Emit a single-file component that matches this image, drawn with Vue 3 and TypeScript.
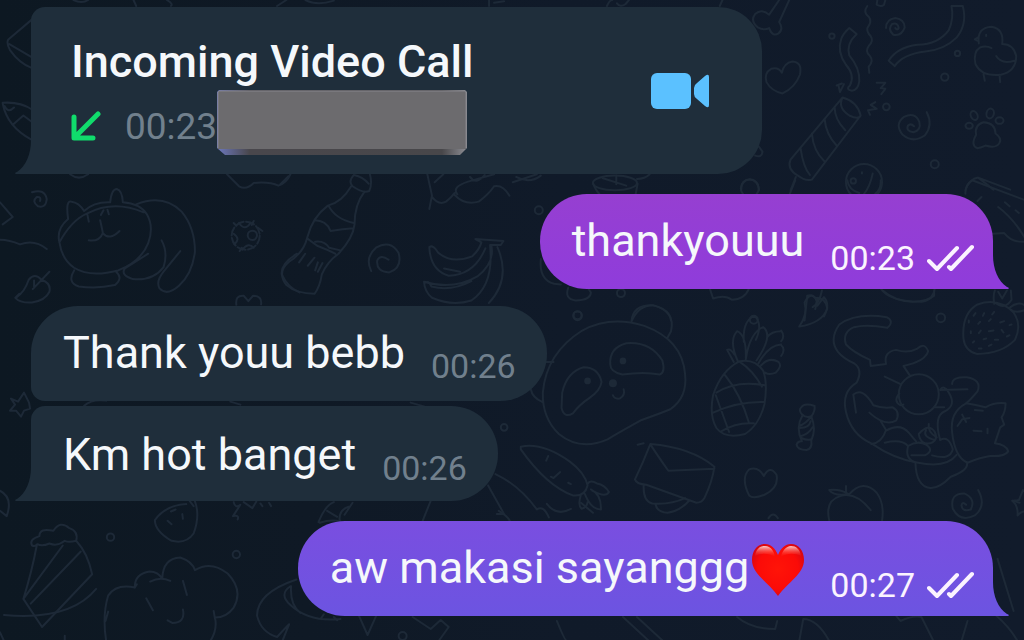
<script setup lang="ts">
interface Message {
  id: number
  text: string
  time: string
  outgoing: boolean
  tail: boolean
  heart?: boolean
  tone: string
}

const messages: Message[] = [
  { id: 1, text: 'thankyouuu', time: '00:23', outgoing: true, tail: true, tone: 'purple' },
  { id: 2, text: 'Thank youu bebb', time: '00:26', outgoing: false, tail: false, tone: 'first' },
  { id: 3, text: 'Km hot banget', time: '00:26', outgoing: false, tail: true, tone: 'last' },
  { id: 4, text: 'aw makasi sayanggg', time: '00:27', outgoing: true, tail: true, heart: true, tone: 'violet' },
]
</script>

<template>
  <main class="chat">
    <svg class="wallpaper" viewBox="0 0 1024 640" preserveAspectRatio="xMinYMin slice" aria-hidden="true">
      <!-- upper left edge -->
      <g transform="scale(.3333)">
        <path d="M96 58L25 118Q18 128 30 150Q58 190 96 204M28 132L96 172M8 308Q60 304 96 328M8 310Q22 380 94 418M14 318Q24 340 42 322M40 372L70 346L94 364M220 0Q245 12 264 0M400 0L408 18M500 0Q520 12 512 18M830 18L858 0M915 0Q950 18 1000 2M1465 0V18M1480 8L1510 4" />
      </g>
      <!-- upper right -->
      <g transform="translate(512 0) scale(.3333)">
        <path d="M282 18Q290 0 298 0M312 10Q322 24 338 12L348 0M620 18L628 0M798 0L768 44Q745 24 726 42Q710 62 734 82Q752 92 768 84Q778 112 796 100Q812 88 798 66L828 0" />
        <path d="M806 218Q796 200 774 206Q752 218 760 246Q774 272 808 280Q846 262 860 224Q868 186 838 184Q812 188 806 218Z" />
        <circle cx="956" cy="108" r="8" /><circle cx="1332" cy="160" r="8" /><circle cx="1294" cy="231" r="11" /><circle cx="1119" cy="320" r="10" /><circle cx="1264" cy="492" r="12" />
        <path d="M1008 84L1030 102Q998 132 1008 166Q1040 204 1038 244Q1034 270 1016 272Q996 268 1010 256Q1026 226 998 194Q970 154 984 116Q990 100 1008 84Z" />
        <path d="M1062 18Q1048 36 1066 50Q1078 64 1062 84Q1060 96 1072 108Q1082 122 1066 138Q1054 154 1070 168Q1082 182 1066 200L1068 218" />
        <path d="M1118 84Q1118 58 1146 54Q1174 58 1174 82Q1164 110 1140 104Q1122 88 1136 72Q1154 66 1156 84Q1152 92 1146 84M1092 0L1090 14Q1104 22 1112 14L1116 0" />
        <path d="M1314 18L1348 18Q1362 72 1330 112Q1292 150 1236 154Q1168 162 1144 198L1126 182Q1150 142 1212 134Q1276 132 1306 90Q1322 56 1314 18Z" />
        <path d="M1396 130Q1390 82 1434 80Q1472 86 1466 132Q1500 132 1508 168Q1508 214 1462 224Q1404 230 1386 192Q1378 156 1400 142Q1418 136 1434 144M1394 112L1384 118L1396 124M1448 168Q1464 194 1502 182M1410 222L1414 242M1458 224L1460 246M1418 104V108" />
        <path d="M970 256L986 250M976 258L980 276L992 252M1090 248L1116 248L1102 264L1116 266L1104 282M1086 306L1072 314L1090 326L1064 330L1070 344" />
        <path d="M988 292Q1032 304 1042 346Q1036 360 1008 346Q972 322 988 292ZM988 292L832 478Q820 506 854 526Q876 544 896 538L1042 346M964 320Q964 358 996 390M934 356Q938 402 970 436M896 400Q900 452 934 484M862 444Q870 502 890 524M848 530L832 570" />
        <path d="M1240 336Q1260 374 1234 406Q1198 430 1168 404Q1142 372 1172 350Q1206 334 1218 366Q1224 390 1200 396Q1176 392 1184 376Q1192 368 1202 378" />
        <ellipse cx="1382" cy="346" rx="10" ry="14" transform="rotate(-25 1382 346)" /><ellipse cx="1430" cy="340" rx="11" ry="15" transform="rotate(15 1430 340)" /><ellipse cx="1458" cy="361" rx="12" ry="10" /><ellipse cx="1367" cy="377" rx="11" ry="9" />
        <path d="M1410 366Q1382 374 1388 404Q1370 436 1392 444Q1404 442 1416 436Q1448 446 1458 428Q1466 414 1446 400Q1446 368 1410 366Z" />
        <circle cx="1052" cy="545" r="54" /><circle cx="1020" cy="542" r="8" /><path d="M1046 516V520M1078 520Q1070 560 1050 584M684 570Q684 540 710 538Q734 540 738 570M726 466Q746 474 748 454L736 438M1356 570Q1368 536 1394 532L1490 568M1394 532L1440 568" />
        <ellipse cx="306" cy="548" rx="66" ry="22" /><path d="M240 548Q248 570 260 582M374 550L368 582M270 534L340 556M310 526V552M10 530Q50 552 84 526M372 536Q396 536 410 522" />
      </g>
      <!-- sleeping cat, leaf and virus -->
      <g transform="translate(0 170) scale(.3333)">
        <path d="M96 66Q134 54 140 86Q138 114 114 108Q94 94 110 80Q124 78 120 92M0 96L38 140L8 162M0 208Q28 208 60 222Q104 206 140 236M50 380Q74 364 86 328Q104 306 124 328Q154 338 148 364Q136 390 96 396Q60 398 46 382L58 370M98 356L148 304M102 330V350" />
        <path d="M178 216Q168 176 204 146Q196 88 214 94Q236 96 252 122Q282 94 330 96Q334 56 350 56Q366 60 368 96Q420 100 440 132Q462 170 444 218Q422 274 354 300Q270 322 222 292Q186 268 178 216ZM178 216Q214 150 260 130Q340 88 430 126M262 134L266 154M300 150Q306 176 308 188Q298 214 266 210M308 188Q328 212 358 182M310 120L302 134M322 118L326 132M408 102Q490 70 544 124Q584 172 584 244Q576 310 536 346Q500 378 478 354Q466 334 490 304L540 242M484 210Q504 246 490 290Q458 332 398 326Q360 314 374 294L444 250M222 300Q200 336 236 348Q290 356 344 344Q370 324 348 304" />
        <circle cx="736" cy="196" r="42" stroke-dasharray="25 8" /><circle cx="756" cy="195" r="14" /><path d="M716 158Q734 184 750 158M700 190Q722 206 702 222M726 238Q744 214 760 232M700 158L708 166M772 172L786 182M760 152L754 164M718 242L724 232M680 12L716 48Q738 60 760 38Q808 34 834 46Q858 38 870 12M210 12Q236 32 264 12M890 250Q840 280 844 312Q862 352 898 366M708 403Q704 374 730 376L744 392L758 376Q786 376 782 402" />
      </g>
      <!-- bottle, spiral and bananas -->
      <g transform="translate(280 170) scale(.3333)">
        <path d="M220 14Q202 34 216 48Q248 70 266 62Q276 40 268 12M220 14Q248 20 264 40M212 48Q184 96 142 106Q96 140 80 202Q70 246 26 274Q-12 304 18 344Q48 370 102 370Q118 350 124 312Q140 274 174 250Q218 202 222 162Q222 102 252 64M144 106Q164 146 220 158M102 150Q138 150 150 182Q188 176 218 174M80 204L110 226Q142 238 164 250M104 214Q132 210 146 232L180 240M74 250L56 276M102 262L82 286M112 276L104 300M126 278L112 304M0 42L24 18" />
        <path d="M272 302Q252 262 286 232Q330 206 354 248Q366 292 326 306Q286 304 290 270Q300 250 324 268" />
        <path d="M446 230Q458 222 472 246Q512 282 574 258Q596 238 602 216L584 206L668 212L660 224L628 224M446 232Q450 300 504 316Q580 314 614 234M490 294L538 304M632 226Q642 278 590 318Q518 360 430 334Q432 364 454 382Q514 408 572 390Q640 344 628 226M650 230Q692 326 624 398M432 338Q444 328 452 348Q510 364 572 332M440 12L454 76L446 116M454 80Q474 106 496 94Q510 84 522 68M462 36L488 12M530 72Q512 50 562 34L640 12M522 74Q552 106 594 94Q624 72 640 48Q666 42 686 76M568 20Q586 46 612 14M696 36L768 12" />
        <circle cx="774" cy="120" r="12" /><path d="M780 266Q774 328 820 340L840 342" />
      </g>
      <!-- doodles around the first outgoing bubble -->
      <g transform="translate(530 180) scale(.3333)">
        <circle cx="656" cy="24" r="27" /><path d="M776 40L792 0M948 0Q952 28 984 38M1048 0Q1050 28 1032 40M1302 40Q1300 14 1322 0L1482 60M1338 62L1350 50M1384 160L1418 158Q1442 188 1482 184M1400 80Q1446 114 1482 176M1420 66L1434 78M1452 90L1462 98M112 322Q100 356 134 360Q178 360 180 336L172 324M302 420Q306 374 362 374Q414 386 420 420M536 324L546 354Q582 342 602 358Q640 358 654 324M820 420L828 346Q856 338 858 376L878 350Q898 372 878 408M858 358L852 386M1048 324Q1074 364 1170 364Q1206 360 1210 324" />
        <circle cx="270" cy="338" r="12" /><circle cx="140" cy="404" r="12" /><circle cx="668" cy="418" r="12" />
      </g>
      <!-- panda, pineapple, carrot and envelope -->
      <g transform="translate(480 300) scale(.3333)">
        <circle cx="290" cy="46" r="13" /><circle cx="70" cy="380" r="10" />
        <path d="M186 276Q196 158 304 90Q388 44 490 76Q604 118 612 220Q620 290 568 326Q534 340 482 358Q424 390 380 416Q298 452 234 400Q184 352 186 276ZM452 62Q472 14 516 14Q584 30 570 92L558 114M196 184L218 184M150 266Q154 290 184 304" />
        <path d="M244 276Q258 214 308 200Q352 200 362 244Q358 270 326 292Q296 312 276 338Q250 354 242 322ZM388 192Q384 142 436 128Q508 122 544 180Q554 216 536 222Q490 212 424 222Q388 214 388 192ZM396 284Q400 296 416 294Q434 284 428 266" />
        <circle class="dot" cx="320" cy="241" r="10" /><circle class="dot" cx="426" cy="181" r="10" /><circle class="dot" cx="396" cy="248" r="12" />
        <path d="M776 182Q720 210 696 284Q684 344 706 382Q732 416 792 400Q834 374 850 310Q860 248 846 210Q820 174 776 182ZM732 224Q778 280 804 368M776 184Q816 210 842 258M704 284L744 394M706 276Q766 238 850 254M696 336Q768 302 848 304M720 392Q766 364 818 368M770 182Q742 120 768 92Q796 104 794 172M788 124Q784 60 820 46Q846 70 824 118M794 176Q806 96 846 80Q878 104 826 180M858 110Q870 92 900 92M832 188Q862 134 900 132M840 194Q864 168 892 184Q904 196 884 216Q864 224 852 216M758 184L738 148Q748 142 760 162" />
        <path d="M120 438Q184 424 266 482Q312 516 320 554Q312 588 276 584Q198 556 120 446ZM202 466L196 480M238 514L218 532L210 528M262 546L270 550M320 550Q328 536 348 548Q372 552 384 574Q374 592 334 570M330 566Q362 582 360 626Q330 626 312 580M300 582Q290 614 302 624Q318 620 320 604" />
        <path d="M508 430Q486 486 462 536Q466 550 496 552L646 606Q662 606 670 592Q694 542 700 498Q630 440 508 430ZM510 434Q532 468 562 510L700 504M488 554Q486 602 514 608Q570 612 612 592M524 612Q528 634 560 636Q598 630 624 600M470 432L488 428" />
        <path d="M848 526Q832 496 804 506Q778 532 804 584Q816 596 850 582Q894 562 886 522Q866 492 848 526ZM44 520Q116 554 168 626Q188 612 204 650M22 554Q50 604 70 640L48 640M862 652Q876 630 890 652" />
      </g>
      <!-- playing cat, strawberry and peach -->
      <g transform="translate(780 290) scale(.3333)">
        <path d="M54 108Q80 72 70 36Q86 4 102 22Q134 22 138 54Q122 98 54 108ZM94 50Q114 40 122 0M110 22L104 44" />
        <circle cx="478" cy="82" r="13" />
        <path d="M546 144Q540 70 588 42Q650 20 696 66Q722 104 700 148Q660 190 586 190Q550 180 546 144ZM638 40Q634 14 640 0M640 36Q670 60 690 28L688 0M650 4L662 24L676 0M684 52Q710 30 732 46M686 56Q700 70 732 58" />
        <path d="M576 76L582 68M608 68L604 76M638 64L632 72M562 90V96M590 100L596 94M622 92L628 86M656 96L668 92M684 104L690 102M568 122V128M592 128L598 120M622 122L636 120M660 118L666 126M574 156L578 152M606 146L614 144M640 148H650M676 138L684 134M592 174H600M622 166L630 162" />
        <path d="M318 112Q340 92 316 80Q224 66 174 102Q142 148 170 184Q186 204 218 218Q246 236 226 276Q180 304 194 364Q210 432 270 458Q340 506 410 516Q494 534 526 492M318 112Q256 100 218 110Q182 126 194 162Q216 186 266 208L268 226L314 220Q306 184 344 178Q378 190 408 174Q430 154 440 182Q432 212 366 226L386 256M310 258L356 280" />
        <circle cx="412" cy="311" r="60" />
        <path d="M354 308Q334 332 358 344L366 342M224 366L216 312Q244 288 276 344Q302 354 334 350Q358 364 344 390Q310 408 264 366M298 392L314 418Q302 456 270 460M314 420Q356 396 382 426L404 452M310 456Q360 444 380 466Q370 504 400 514M380 466Q408 448 434 462Q460 480 430 494L390 494M412 430Q442 396 460 424Q472 450 446 458Q416 462 412 430ZM434 418Q422 438 460 448M442 400Q438 424 466 440M452 494Q506 510 514 476Q502 434 476 448Q456 376 490 362Q526 344 502 306Q486 280 476 298L558 296M512 280Q512 258 556 260Q602 268 588 302Q568 326 554 338M460 350H488" />
        <path d="M554 338Q504 364 512 426Q520 500 558 516Q598 500 626 496Q670 498 680 482Q674 462 640 458L656 410L668 402L660 380Q672 364 672 338Q640 334 612 350Q582 342 554 338ZM528 406L542 386L564 382M542 372L554 394M580 358L604 360M576 420L600 422M618 414V428M402 516Q404 586 446 592Q472 594 508 558Q564 538 556 514" />
        <path d="M60 350Q70 336 100 346Q102 362 90 378Q106 414 90 450Q94 474 76 478Q48 478 46 462Q50 450 62 452Q42 410 64 374Q50 358 60 350ZM64 372Q74 384 92 376M56 412Q84 412 88 392M60 442Q78 450 88 446M54 406Q72 400 90 378M60 436Q82 430 94 410" />
        <path d="M144 690Q130 630 176 616Q222 600 268 658M144 598Q174 594 202 610Q160 618 144 598ZM194 586V606M204 610Q246 564 286 606Q310 638 302 690M590 598Q616 646 580 674Q536 696 514 654Q504 608 548 608Q584 624 568 656Q542 664 540 644Q542 630 554 642M692 630L712 628L724 598L732 606M692 630Q710 644 708 674Q724 658 732 664M0 120Q12 138 0 152M0 164Q14 176 0 196M304 0Q340 32 394 34Q440 32 458 16V0" />
      </g>
      <!-- cake, muffin and whale -->
      <g transform="translate(0 490) scale(.3333)">
        <path d="M96 164Q86 146 118 136Q118 110 160 120Q180 88 208 112Q236 122 228 150Q206 156 194 150Q172 168 148 158Q126 168 112 160Q106 168 96 164ZM110 164Q96 240 70 324L126 408L276 250Q262 186 230 152M70 324L188 164M92 338L242 182" />
        <circle cx="331" cy="139" r="11" /><circle cx="708" cy="191" r="11" />
        <path d="M558 40Q494 44 464 88Q464 120 514 150Q558 160 580 128Q600 74 584 32M502 90L514 100M546 70L548 84M512 62L526 56M568 30L580 46M700 34Q704 54 720 42L698 76Q718 72 712 86M730 34L756 52L768 32M780 38L786 46M806 36L812 46M954 94Q974 44 1000 34M958 96Q992 84 1020 92M980 60L1010 78M0 0Q40 20 20 76L0 60" />
        <path d="M318 450Q306 374 324 314Q348 278 404 290Q402 250 448 242Q474 242 486 264Q488 202 540 200Q576 212 584 238Q632 208 682 248Q730 298 700 350Q678 380 644 380Q652 416 630 450M324 362L316 390M404 290L410 280M450 272Q480 256 510 270M548 270L560 312M438 322L458 358M548 356Q556 396 516 396L502 388M640 360L644 384M888 266Q770 306 770 374Q782 424 830 438Q850 416 866 400L846 450M870 286Q834 310 870 342Q926 394 1020 384M872 286Q868 342 900 366M970 370L962 382M1000 378L1010 388M194 434V450M0 424L12 450" />
      </g>
      <!-- strip between bubbles and lower edge -->
      <path d="M11 398L18 401L24 392L29 402L30 408L24 410L21 416L16 410L10 410L15 404ZM84 405Q92 398 106 400M230 401L240 404M410 402L424 406M340 524Q336 510 348 506M352 502L344 514M430 500L422 520M498 510Q508 516 510 522M546 503Q556 516 570 508M580 502L592 512M1011 500L1018 502M4 614Q70 620 96 588M358 614L367 634L376 614M412 616L430 628L440 619L448 626L438 640M556 620Q564 640 566 640M622 616L648 640M636 616L662 640M736 616Q750 628 774 628L776 620M798 640L802 618Q816 618 828 640M894 614L899 620Q912 614 920 616L932 640M966 620L960 640M994 614Q1008 626 1016 640M996 558L1012 610" />
      <circle cx="402" cy="635" r="4" />
    </svg>

    <article class="bubble call">
      <div>
        <h1 class="call-title">Incoming Video Call</h1>
        <div class="call-info">
          <svg class="arrow" viewBox="0 0 30 30" role="img" aria-label="Incoming">
            <path d="M27 3L4 26M3 6V27H22" />
          </svg>
          <time class="call-time">00:23</time>
          <svg class="cover" viewBox="0 0 250 66" aria-hidden="true">
            <defs>
              <linearGradient id="bevel">
                <stop offset="0" stop-color="#6d78bd" />
                <stop offset=".13" stop-color="#49474c" />
                <stop offset=".9" stop-color="#48474a" />
                <stop offset="1" stop-color="#8d8e94" />
              </linearGradient>
            </defs>
            <path fill="url(#bevel)" d="M2 0H248L250 2V58L243 65H8L0 58V2Z" />
            <path fill="#6c6b6e" d="M2 1H248L249 3V59H1V3Z" />
            <path fill="none" stroke="#85858b" d="M1 58V2L2 1H248L249 2V58" />
          </svg>
        </div>
      </div>
      <button class="video" type="button" aria-label="Video call">
        <svg viewBox="0 0 58 38">
          <rect x="0" y="1" width="40" height="36" rx="6" />
          <path d="M43 16Q43 13 46 11L54 4Q58 1 58 5V33Q58 37 54 34L46 27Q43 25 43 22Z" />
        </svg>
      </button>
      <svg class="tail left" viewBox="0 0 18 34" aria-hidden="true"><path d="M16 0H18V34H1Q-1 33 2 32C11 26 16 14 16 0Z" /></svg>
    </article>

    <article
      v-for="m in messages"
      :key="m.id"
      class="bubble message"
      :class="[m.tone, m.outgoing ? 'outgoing' : 'incoming']"
    >
      <p class="text">
        {{ m.text }}<svg v-if="m.heart" class="heart" viewBox="0 0 52 54" role="img" aria-label="Red heart">
          <defs>
            <radialGradient id="heartFill" cx=".5" cy=".48" r=".6">
              <stop offset="0" stop-color="#ff1408" />
              <stop offset=".65" stop-color="#fb0b08" />
              <stop offset="1" stop-color="#cf0614" />
            </radialGradient>
            <linearGradient id="heartShine" x2="0" y2="1">
              <stop offset="0" stop-color="#ffd5cf" stop-opacity=".95" />
              <stop offset="1" stop-color="#ff3020" stop-opacity="0" />
            </linearGradient>
          </defs>
          <path fill="url(#heartFill)" d="M26 12C23 5 19 1 13 1C5 1 0 8 0 17C0 31 16 39 26 53C36 39 52 31 52 17C52 8 47 1 39 1C33 1 29 5 26 12Z" />
          <path fill="url(#heartShine)" d="M3 13C4 6 8 3 13 3C19 3 22 8 23 14C17 10 9 10 3 13ZM29 14C30 8 34 3 39 3C44 3 48 6 49 13C43 10 35 10 29 14Z" />
        </svg>
      </p>
      <div class="meta">
        <time>{{ m.time }}</time>
        <svg v-if="m.outgoing" class="checks" viewBox="0 0 48 28" role="img" aria-label="Read">
          <path d="M2 17L10 25L30 4M22 23L24 25L45 3" />
        </svg>
      </div>
      <svg v-if="m.tail" class="tail" :class="m.outgoing ? 'right' : 'left'" viewBox="0 0 18 34" aria-hidden="true">
        <path d="M16 0H18V34H1Q-1 33 2 32C11 26 16 14 16 0Z" />
      </svg>
    </article>
  </main>
</template>

<style>
body {
  margin: 0;
  background: #101a26;
}
</style>

<style scoped>
.chat {
  position: relative;
  display: flex;
  flex-direction: column;
  align-items: flex-start;
  box-sizing: border-box;
  min-height: 100vh;
  padding: 7px 31px 25px;
  overflow: hidden;
  background: linear-gradient(90deg, #0d1822 0%, #0f1925 30%, #101a29 55%, #111b2b 100%);
  color: #f5f8fb;
  font-family: Roboto, "Liberation Sans", sans-serif;
}

.wallpaper {
  position: absolute;
  inset: 0;
  width: 100%;
  height: 100%;
  fill: none;
  stroke: #1d2937;
  stroke-width: 6;
  stroke-linecap: round;
  stroke-linejoin: round;
}

.wallpaper > path,
.wallpaper > circle {
  stroke-width: 2;
}

.wallpaper .dot {
  fill: #1d2937;
  stroke: none;
}

.bubble {
  --fill: #1f2e3b;
  position: relative;
  display: flex;
  box-sizing: border-box;
  max-width: 100%;
  background: var(--fill);
}

.call {
  align-items: center;
  justify-content: space-between;
  width: 731px;
  padding: 28px 53px 18px 40px;
  border-radius: 14px 44px 44px 0;
}

.call-title {
  margin: 0;
  font-size: 45px;
  font-weight: 500;
  line-height: 54px;
}

.call-info {
  display: flex;
  align-items: center;
  margin-top: 1px;
}

.arrow {
  width: 30px;
  height: 30px;
  margin-top: 6px;
  fill: none;
  stroke: #10dc6c;
  stroke-width: 5;
  stroke-linecap: round;
  stroke-linejoin: round;
}

.call-time {
  margin: 8px 0 0 24px;
  color: #71808d;
  font-size: 37px;
  line-height: 44px;
}

.cover {
  width: 250px;
  height: 66px;
}

.video {
  display: flex;
  margin-bottom: 10px;
  padding: 0;
  border: 0;
  background: none;
}

.video svg {
  width: 58px;
  height: 38px;
  fill: #5bc1ff;
}

.message {
  justify-content: space-between;
  padding: 20px 31px 11px 32px;
}

.text {
  display: flex;
  margin: 0;
  font-size: 45px;
  line-height: 54px;
  white-space: nowrap;
}

.meta {
  display: flex;
  align-items: center;
  align-self: flex-end;
  gap: 12px;
  height: 40px;
  margin: 24px 0 0 26px;
  color: #71808d;
  font-size: 34px;
  line-height: 40px;
}

.incoming {
  margin-top: 17px;
}

.incoming .meta {
  margin: 20px 0 4px 26px;
}

.first {
  border-radius: 47px 47px 47px 14px;
}

.last {
  margin-top: 5px;
  border-radius: 14px 47px 47px 0;
}

.last .text {
  padding-top: 2px;
}

.last .meta {
  margin: 22px 0 2px 26px;
}

.outgoing {
  align-self: flex-end;
  margin-top: 20px;
  padding-right: 18px;
  border-radius: 47px 47px 0 47px;
}

.outgoing .meta {
  color: #fbf3ff;
}

.purple {
  --fill: #8f3cdb;
  background: linear-gradient(#963fd1, #8f3cdb);
}

.violet {
  --fill: #6c54e1;
  background: linear-gradient(#7a4ee0, #6c54e1);
}

.checks {
  width: 48px;
  height: 28px;
  fill: none;
  stroke: currentColor;
  stroke-width: 4;
  stroke-linecap: round;
  stroke-linejoin: round;
}

.heart {
  width: 52px;
  height: 54px;
  margin: 2px 0 0 3px;
}

.tail {
  position: absolute;
  bottom: 0;
  width: 18px;
  height: 34px;
  fill: var(--fill);
}

.left {
  left: -16px;
}

.right {
  right: -16px;
  transform: scaleX(-1);
}
</style>
